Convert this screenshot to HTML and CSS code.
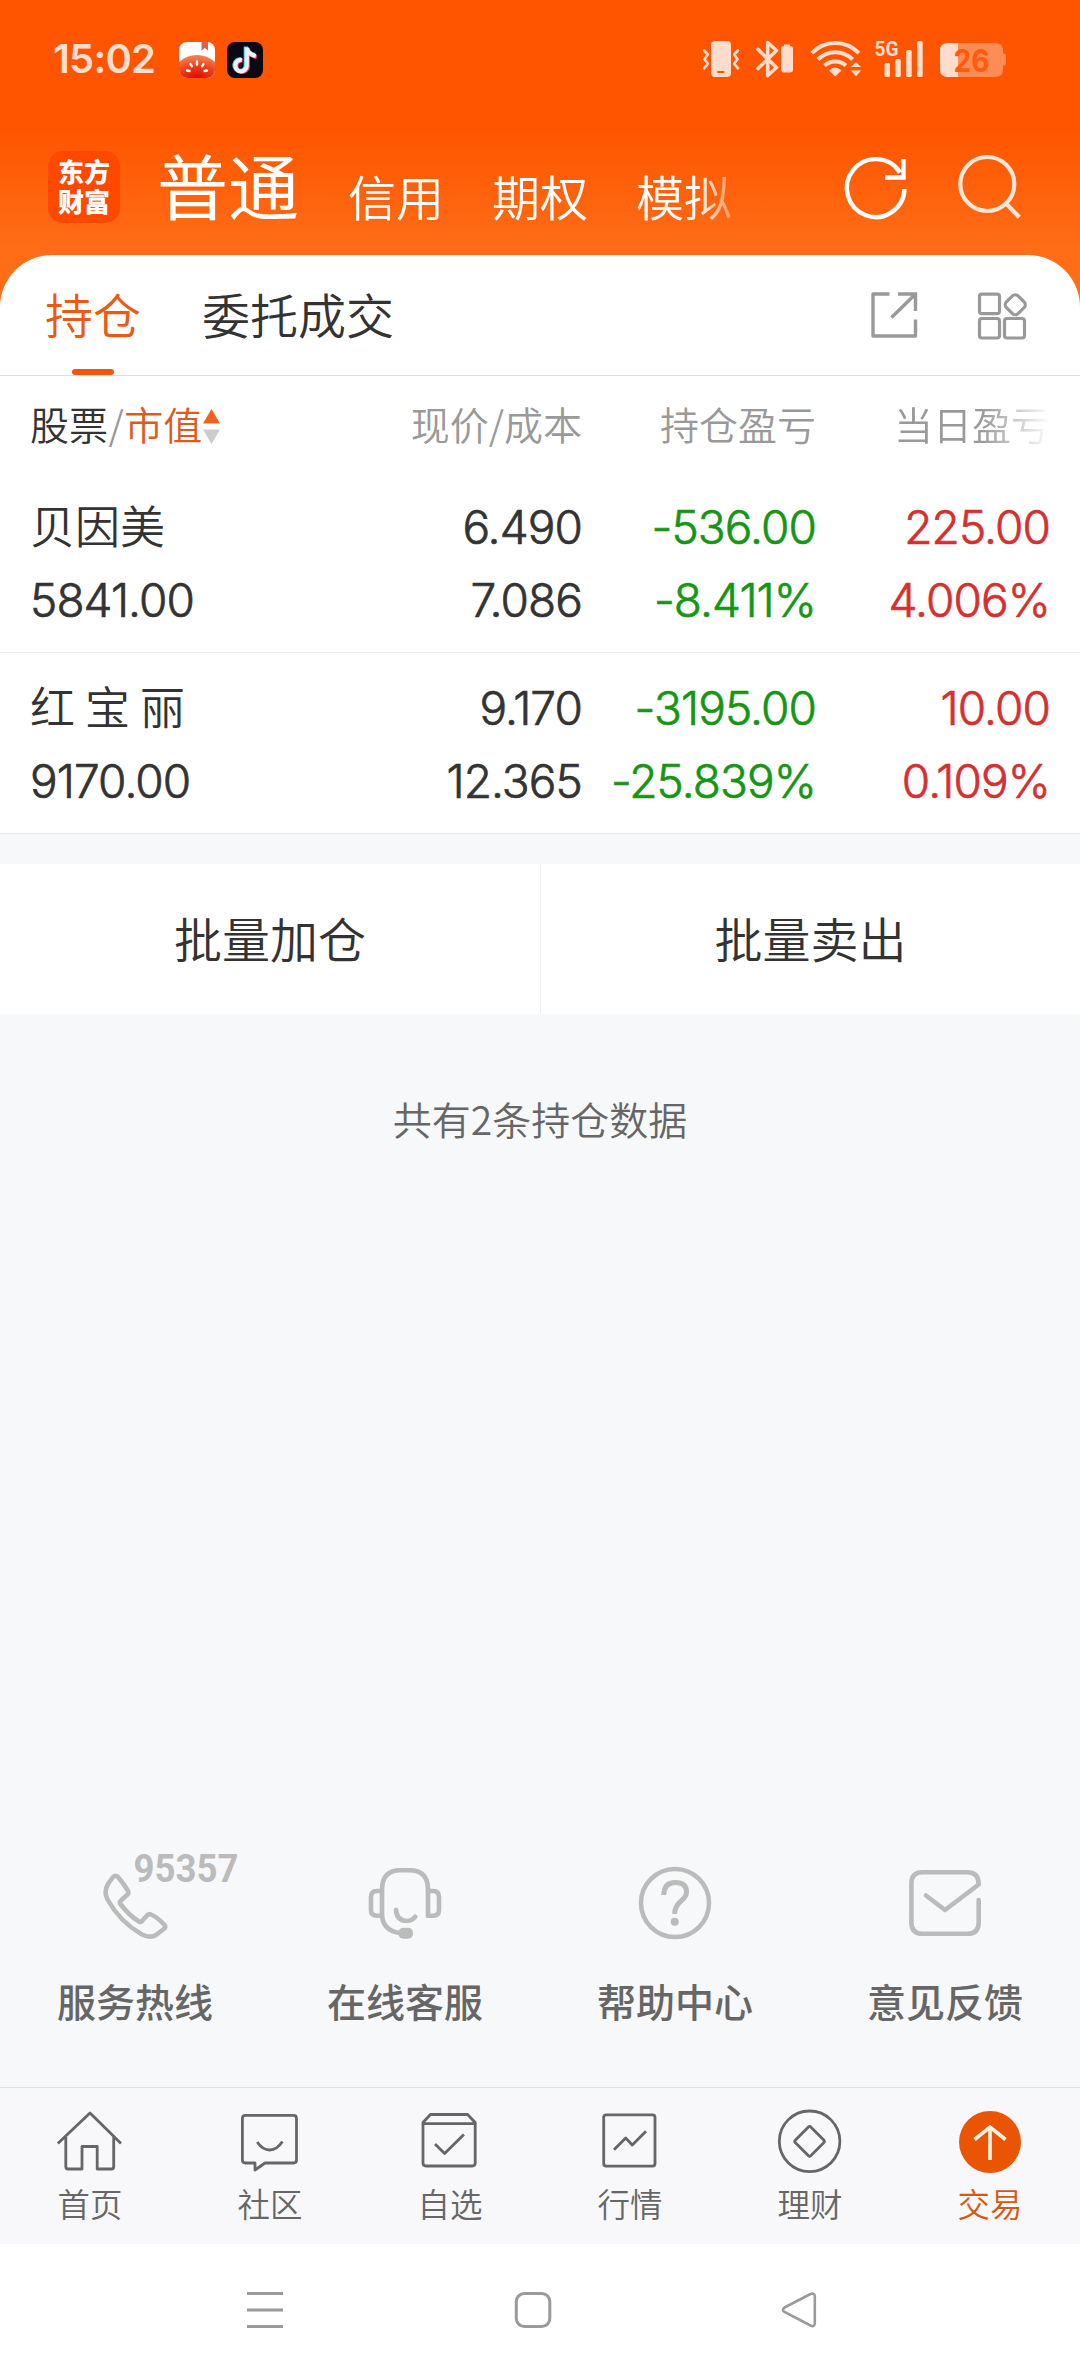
FILE: index.html
```html
<!DOCTYPE html>
<html lang="zh-CN">
<head>
<meta charset="utf-8">
<title>交易 - 持仓</title>
<link rel="stylesheet" href="styles.css">
</head>
<body>
<div class="app">
  <header class="top">
    <div class="status">
      <span class="clock">15:02</span>
      <svg class="app-icon" viewBox="0 0 36 36" width="36" height="36">
        <defs>
          <clipPath id="tile"><rect width="36" height="36" rx="8"/></clipPath>
          <radialGradient id="melon" cx=".5" cy="1" r=".9"><stop offset="0" stop-color="#d80a06"/><stop offset=".55" stop-color="#ea3d16"/><stop offset="1" stop-color="#f47a50"/></radialGradient>
        </defs>
        <g clip-path="url(#tile)">
          <rect width="36" height="36" fill="#fff"/>
          <path d="M0 20Q8 13 18 13T36 20V36H0Z" fill="url(#melon)"/>
          <path d="M22.500 0h6.500v8.500l-3.300-2.500-3.200 2.500z" fill="#ea5a48"/>
          <g stroke="#fff" stroke-width="2.400" stroke-linecap="round"><path d="M18 19.500v3M11.500 22l1.300 2.200M24.500 22l-1.300 2.200M8 28.500l2.500.5M28 28.500l-2.500.5"/></g>
        </g>
      </svg>
      <svg class="app-icon second" viewBox="0 0 36 36" width="36" height="36">
        <rect width="36" height="36" rx="8" fill="#0b0a14"/>
        <g fill="none" stroke-width="4.200">
          <path d="M18.800 4.500V23.500A5.700 5.700 0 1 1 13.800 17.500M18.800 5q1.500 6.500 9 8" stroke="#25e8e6"/>
          <path d="M20.800 6.500V24.500A5.700 5.700 0 1 1 15.800 18.500M20.800 7q1.500 6.500 9 8" stroke="#f5365e"/>
          <path d="M19.800 5.500V24A5.700 5.700 0 1 1 14.800 18M19.800 6q1.500 6.500 9 8" stroke="#f4eff4"/>
        </g>
      </svg>
      <svg class="signals" viewBox="700 36 308 46" width="308" height="46" fill="#ffdccb">
        <path fill-rule="evenodd" d="M715 41h12q4 0 4 4v28q0 4-4 4h-12q-4 0-4-4v-28q0-4 4-4zM718 71q-1 0-1 1t1 1h5.500q1 0 1-1t-1-1z"/>
        <g fill="none" stroke="#ffdccb" stroke-linejoin="round" stroke-linecap="round">
          <path stroke-width="2.600" d="M704 50.500l3.800 4-3.300 4.800 3.300 4.500-3.800 4.500M738 50.500l-3.800 4 3.300 4.800-3.300 4.500 3.800 4.500"/>
          <path stroke-width="3.600" d="M758 49.500L776.500 67.500 767.700 75.500V42.500L776.500 50.500 758 68.500"/>
          <path stroke-width="4" stroke-linecap="butt" d="M811.800 53.200A32 32 0 0 1 858.800 53.200M818 59.500A24 24 0 0 1 852.600 59.500M824.500 65.500A16.500 16.500 0 0 1 846 65.500"/>
        </g>
        <path d="M784 46v-1.500h6V46q3 0 3 3v20.500q0 3-3 3h-6q-3 0-3-3V49q0-3 3-3z"/>
        <path d="M829 70.500q6-6 12.500 0L835.200 76.500zM851 67l5-5 5 5zM851 70.500h10l-5 6z"/>
        <text x="874.500" y="56" class="net" textLength="24" lengthAdjust="spacingAndGlyphs">5G</text>
        <rect x="884.500" y="63" width="5.500" height="14" rx="1.500"/><rect x="895.300" y="59" width="5.500" height="18" rx="1.500"/><rect x="906.200" y="50" width="5.500" height="27" rx="1.500"/><rect x="917.200" y="41" width="5.500" height="36" rx="1.500"/>
        <path d="M948 43h47q8 0 8 8v2.500h1q2 0 2 2v8q0 2-2 2h-1V69q0 8-8 8h-47q-8 0-8-8V51q0-8 8-8z" fill="#ff8c54"/>
        <path d="M948 43h10v34h-10q-8 0-8-8V51q0-8 8-8z"/>
        <text x="953.500" y="71.800" class="level" textLength="36" lengthAdjust="spacingAndGlyphs">26</text>
      </svg>
    </div>
    <div class="accounts">
      <div class="logo">东方<br>财富</div>
      <nav class="account-tabs">
        <span class="current">普通</span><span>信用</span><span>期权</span><span>模拟</span>
      </nav>
      <svg class="refresh" viewBox="840 150 70 76" width="70" height="76" fill="none" stroke="#fff" stroke-width="4.400">
        <path d="M904.500 189A28.800 29 0 1 1 900 172.500M903.500 159V177.500H885"/>
      </svg>
      <svg class="search" viewBox="954 150 70 76" width="70" height="76" fill="none" stroke="#ffe6d9" stroke-width="4.200">
        <circle cx="987.300" cy="184" r="27"/><path d="M1005.500 203L1019.300 217.300"/>
      </svg>
    </div>
  </header>

  <main class="panel">
    <div class="tabs">
      <span class="tab active">持仓</span>
      <span class="tab">委托成交</span>
      <svg class="share" viewBox="868 289 52 52" width="52" height="52" fill="none" stroke="#999" stroke-width="3.400">
        <path stroke-linejoin="round" d="M889.500 294H873V336H915.500V319.500"/><path d="M898 294H915.500V311M915 294.500L891.500 317.500"/>
      </svg>
      <svg class="grid-icon" viewBox="976 289 52 52" width="52" height="52" fill="none" stroke="#999" stroke-width="3.200">
        <rect x="979.500" y="294.200" width="20" height="19.500" rx="2.500"/><rect x="979.500" y="318.500" width="20" height="19.500" rx="2.500"/><rect x="1004.500" y="318.500" width="20" height="19.500" rx="2.500"/>
        <rect x="1007" y="296.500" width="16.500" height="16.500" rx="4" transform="rotate(45 1015.250 304.750)"/>
      </svg>
    </div>

    <div class="cols head">
      <span class="sort"><b>股票</b><i>/</i><em>市值</em>
        <svg viewBox="0 0 17 36" width="17" height="36"><path d="M8.500 0L17 14.500H0Z" fill="#f0611c"/><path d="M8.500 35L0 20.500H17Z" fill="#ccc"/></svg>
      </span>
      <span>现价/成本</span><span>持仓盈亏</span><span class="fade">当日盈亏</span>
    </div>

    <div class="holding">
      <div class="cols"><span class="name">贝因美</span><span>6.490</span><span class="down">-536.00</span><span class="up">225.00</span></div>
      <div class="cols"><span>5841.00</span><span>7.086</span><span class="down">-8.411%</span><span class="up">4.006%</span></div>
    </div>
    <div class="holding last">
      <div class="cols"><span class="name">红 宝 丽</span><span>9.170</span><span class="down">-3195.00</span><span class="up">10.00</span></div>
      <div class="cols"><span>9170.00</span><span>12.365</span><span class="down">-25.839%</span><span class="up">0.109%</span></div>
    </div>
  </main>

  <div class="batch"><span>批量加仓</span><span>批量卖出</span></div>
  <p class="count">共有2条持仓数据</p>

  <section class="services">
    <div class="service">
      <svg viewBox="0 1840 270 102" width="270" height="102" fill="none" stroke="#bbb" stroke-width="4.600" stroke-linejoin="round">
        <path d="M113 1877Q115.400 1874.500 118 1877Q124 1884 128 1891Q129 1893 127.500 1894.500L121 1900.500Q119 1902 120.500 1904Q129 1915.500 139 1921.500Q140.500 1922.500 142 1921L147.500 1915Q149 1913.500 151 1914.500Q158.500 1918 164.500 1925Q166 1927 164.500 1928.500L156 1935Q150 1938.500 142 1934.500Q120 1922 107.500 1899.500Q103.500 1892 108 1884Z"/>
        <text x="133.500" y="1882.300" class="hotline" textLength="105" lengthAdjust="spacingAndGlyphs">95357</text>
      </svg>
      <span>服务热线</span>
    </div>
    <div class="service">
      <svg viewBox="270 1840 270 102" width="270" height="102" fill="none" stroke="#bbb" stroke-width="4.600" stroke-linejoin="round" stroke-linecap="round">
        <path d="M428 1915.700V1889.500Q428 1870.300 409.500 1870.300H400.500Q382 1870.300 382 1889.500V1914Q382 1930 399.500 1933"/>
        <path d="M382 1891H377Q371 1891 371 1897V1910Q371 1915.700 377 1915.700H382M428 1891H433Q439 1891 439 1897V1910Q439 1915.700 433 1915.700H428"/>
        <path d="M396 1909.700Q396.500 1921 407 1921Q412 1921 415.300 1916.700"/>
        <rect x="398.400" y="1927.700" width="14.600" height="11" rx="5" fill="#bbb" stroke="none"/>
      </svg>
      <span>在线客服</span>
    </div>
    <div class="service">
      <svg viewBox="540 1840 270 102" width="270" height="102" fill="none" stroke="#bbb" stroke-width="4.500">
        <circle cx="675" cy="1903" r="34"/>
        <path stroke-width="5" d="M663.800 1895Q664 1882.500 675.300 1882.500Q686.500 1882.500 686.500 1892Q686.500 1896.500 681.500 1900.500Q674.500 1906.500 674.700 1914"/>
        <circle cx="674.700" cy="1921.700" r="4" fill="#bbb" stroke="none"/>
      </svg>
      <span>帮助中心</span>
    </div>
    <div class="service">
      <svg viewBox="810 1840 270 102" width="270" height="102" fill="none" stroke="#bbb" stroke-width="4.600" stroke-linejoin="round" stroke-linecap="round">
        <path d="M978.700 1900V1922.500Q978.700 1933.800 967.500 1933.800H922.500Q911.400 1933.800 911.400 1922.500V1883.500Q911.400 1872.200 922.500 1872.200H967.500Q978.700 1872.200 978.700 1884.500L945 1910L926 1895.500"/>
      </svg>
      <span>意见反馈</span>
    </div>
  </section>

  <nav class="tabbar">
    <div class="item">
      <svg viewBox="50 2108 80 66" width="80" height="66"><path d="M57.800 2143.500L90 2113 121 2143.500M65.800 2137V2166.500Q65.800 2169 68 2169H82V2146.500H97.200V2169H111.500Q113.700 2169 113.700 2166.500V2137"/></svg>
      <span>首页</span>
    </div>
    <div class="item">
      <svg viewBox="230 2108 80 66" width="80" height="66"><path d="M245.400 2115.300H293.500Q296.500 2115.300 296.500 2118.300V2160Q296.500 2163 293.500 2163H265L255 2170V2163H245.400Q242.400 2163 242.400 2160V2118.300Q242.400 2115.300 245.400 2115.300Z"/><path d="M257.200 2142Q262.500 2150 269.700 2150T282.400 2141.500"/></svg>
      <span>社区</span>
    </div>
    <div class="item">
      <svg viewBox="410 2108 80 66" width="80" height="66"><path d="M423 2123.700H475.200V2163Q475.200 2166 472.200 2166H426Q423 2166 423 2163V2122.500L430.400 2114.500H467.600L475.200 2122.500V2124M435 2144L444.600 2153.500 463.900 2134.500"/></svg>
      <span>自选</span>
    </div>
    <div class="item">
      <svg viewBox="590 2108 80 66" width="80" height="66"><rect x="603.700" y="2114.800" width="51.300" height="51.300" rx="2.500"/><path d="M614 2149.700L625.700 2138 632.300 2145 646 2131.300"/></svg>
      <span>行情</span>
    </div>
    <div class="item">
      <svg viewBox="770 2108 80 66" width="80" height="66"><circle cx="809.600" cy="2141.300" r="30.300"/><rect x="798.600" y="2130.300" width="22" height="22" rx="2" transform="rotate(45 809.600 2141.300)"/></svg>
      <span>理财</span>
    </div>
    <div class="item on">
      <svg viewBox="950 2108 80 66" width="80" height="66"><circle cx="990" cy="2142" r="31" class="disc"/><path class="arrow" d="M990 2160V2127M974.600 2139.500L990 2127 1005.500 2139.500"/></svg>
      <span>交易</span>
    </div>
  </nav>

  <div class="sysnav">
    <svg viewBox="245 2290 40 40" width="40" height="40"><path d="M247 2293.500H283M247 2310H283M247 2326.500H283"/></svg>
    <svg viewBox="512 2290 40 40" width="40" height="40"><rect x="516.300" y="2293.500" width="33.500" height="33" rx="8"/></svg>
    <svg viewBox="779 2290 40 40" width="40" height="40"><path stroke-width="2.600" d="M784.500 2307.500L810.500 2294Q814.800 2292.500 814.800 2296.500V2323Q814.800 2327.500 810.500 2325.500L784.500 2312Q781.500 2310 784.500 2307.500Z"/></svg>
  </div>
</div>
</body>
</html>
```
FILE: styles.css
```css
* { box-sizing: border-box; }
body { margin: 0; background: #f7f8fa; }
svg { display: block; flex: none; }

.app {
  width: 1080px;
  height: 2376px;
  display: flex;
  flex-direction: column;
  font-family: "Noto Sans CJK SC", sans-serif;
  font-weight: 350;
  color: #333;
  white-space: nowrap;
  overflow: hidden;
}

.top {
  flex: none;
  height: 310px;
  margin-bottom: -55px;
  background: linear-gradient(#ff5500 0, #ff5500 130px, #ff6d17 250px);
}

.status { display: flex; align-items: center; height: 118px; padding-left: 53px; }
.clock {
  width: 126px;
  font: 600 40px/46px Inter, sans-serif;
  letter-spacing: -0.8px;
  color: #ffdccb;
}
.app-icon { margin-top: 2px; }
.app-icon.second { margin-left: 12px; }
.signals { margin-left: 437px; }
.net { font: 700 21px Roboto, sans-serif; }
.level { font: 700 31px Inter, sans-serif; fill: #ff5a0d; }

.accounts { display: flex; height: 137px; padding-left: 48px; align-items: flex-start; }
.logo {
  width: 72px;
  height: 72px;
  margin-top: 33px;
  padding-top: 5px;
  border-radius: 15px;
  background: #ff4800;
  color: #fff;
  font-size: 26px;
  font-weight: 900;
  line-height: 30px;
  text-align: center;
}
.account-tabs {
  width: 625px;
  height: 125px;
  margin-left: 37px;
  display: flex;
  align-items: flex-start;
  color: #fff;
  font-size: 48px;
  line-height: 154px;
  overflow: hidden;
  -webkit-mask-image: linear-gradient(90deg, #000 540px, transparent 590px);
  mask-image: linear-gradient(90deg, #000 540px, transparent 590px);
}
.account-tabs span { width: 144px; }
.account-tabs .current { width: 191px; font-size: 71px; line-height: 130px; font-weight: 400; }
.refresh { margin: 32px 0 0 58px; }
.search { margin: 32px 0 0 44px; }

.panel { flex: none; background: #fff; border-radius: 52px 52px 0 0; }
.tabs {
  height: 121px;
  padding-left: 45px;
  display: flex;
  align-items: center;
  border-bottom: 1px solid #ddd;
}
.tab { position: relative; height: 120px; font-size: 48px; line-height: 117px; margin-right: 61px; }
.tab.active { color: #ea5a14; }
.tab.active::after {
  content: "";
  position: absolute;
  left: 27px;
  bottom: 0;
  width: 42px;
  height: 6px;
  border-radius: 3px;
  background: #f0570e;
}
.share { margin-left: 413px; }
.grid-icon { margin-left: 56px; }

.cols { display: grid; grid-template-columns: 272px 280px 234px 234px; padding: 0 30px; text-align: right; }
.cols > :first-child { text-align: left; }
.head { height: 97px; line-height: 94px; font-size: 39px; color: #999; }
.head b { font-weight: inherit; color: #333; }
.head i { font-style: normal; padding: 0 0.5px; }
.head em { font-style: normal; color: #dd5b1c; }
.sort { display: flex; align-items: flex-start; }
.sort svg { margin: 33px 0 0 1px; }
.fade {
  -webkit-mask-image: linear-gradient(90deg, #000 165px, transparent 236px);
  mask-image: linear-gradient(90deg, #000 165px, transparent 236px);
}

.holding {
  height: 180px;
  padding-top: 18px;
  border-bottom: 1px solid #e9ebee;
  font: 300 46px/73px Inter, "Noto Sans CJK SC", sans-serif;
  letter-spacing: -0.9px;
  -webkit-text-stroke: 0.7px currentColor;
}
.holding.last { height: 181px; padding-top: 19px; }
.name {
  font: 350 45px/68px "Noto Sans CJK SC", sans-serif;
  letter-spacing: 0;
  -webkit-text-stroke: 0;
}
.down { color: #159615; }
.up { color: #d53030; }

.batch {
  flex: none;
  display: grid;
  grid-template-columns: 540px 540px;
  height: 150px;
  margin-top: 30px;
  background: #fff;
  font-size: 48px;
  line-height: 146px;
  text-align: center;
}
.batch span + span { border-left: 1px solid #ebedf0; }
.count { margin: 74px 0 0; font-size: 39px; line-height: 60px; text-align: center; color: #666; }

.services { display: grid; grid-template-columns: repeat(4, 270px); margin-top: auto; padding-bottom: 57px; }
.service { text-align: center; font-size: 39px; font-weight: 500; line-height: 60px; color: #666; }
.service svg { margin-bottom: 28px; }
.hotline { font: 700 38px Roboto, sans-serif; fill: #bbb; stroke: none; }

.tabbar {
  flex: none;
  display: grid;
  grid-template-columns: repeat(6, 180px);
  height: 157px;
  padding-top: 20px;
  border-top: 1px solid #dfe0e2;
  background: #f8f8fa;
}
.item { display: flex; flex-direction: column; align-items: center; color: #666; font-size: 32.5px; line-height: 48px; }
.item svg { fill: none; stroke: #666; stroke-width: 2.8; stroke-linejoin: round; margin-bottom: 5px; }
.item.on { color: #d9580f; }
.item .disc { fill: #ea5504; stroke: none; }
.item .arrow { stroke: #fff3e6; stroke-width: 3.6; stroke-linejoin: miter; }

.sysnav {
  flex: none;
  display: flex;
  align-items: center;
  height: 132px;
  padding-left: 245px;
  gap: 227px;
  background: #fff;
}
.sysnav svg { fill: none; stroke: #9a9a9a; stroke-width: 3; }
```
